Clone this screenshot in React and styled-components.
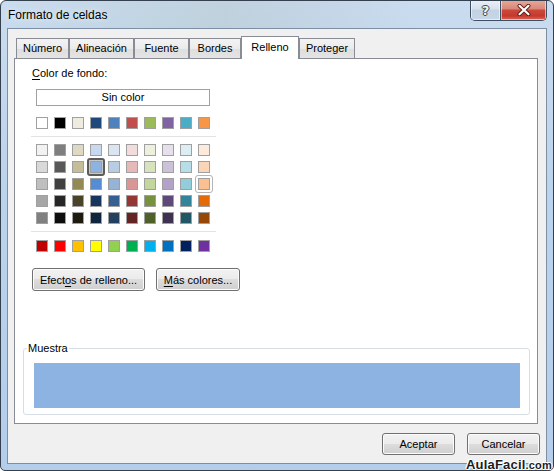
import styled, { createGlobalStyle, css } from "styled-components"

const GlobalStyle = createGlobalStyle`
  html, body { margin: 0; padding: 0; background: #fff; }
  body { font-family: "Liberation Sans", Arial, sans-serif; font-size: 11px; color: #000; }
`

const THEME = ["#FFFFFF", "#000000", "#EEECE1", "#1F497D", "#4F81BD", "#C0504D", "#9BBB59", "#8064A2", "#4BACC6", "#F79646"]

const SHADES = [
  ["#F2F2F2", "#7F7F7F", "#DDD9C3", "#C6D9F0", "#DBE5F1", "#F2DCDB", "#EBF1DD", "#E5E0EC", "#DBEEF3", "#FDEADA"],
  ["#D9D9D9", "#595959", "#C4BD97", "#8DB3E2", "#B8CCE4", "#E5B9B7", "#D7E3BC", "#CCC1D9", "#B7DDE8", "#FBD5B5"],
  ["#BFBFBF", "#404040", "#938953", "#548DD4", "#95B3D7", "#D99694", "#C3D69B", "#B2A2C7", "#92CDDC", "#FAC08F"],
  ["#A6A6A6", "#262626", "#494429", "#17365D", "#366092", "#953734", "#76923C", "#5F497A", "#31859B", "#E36C09"],
  ["#808080", "#0D0D0D", "#1D1B10", "#0F243E", "#244061", "#632423", "#4F6128", "#3F3151", "#205867", "#974806"],
]

const STANDARD = ["#C00000", "#FF0000", "#FFC000", "#FFFF00", "#92D050", "#00B050", "#00B0F0", "#0070C0", "#002060", "#7030A0"]

// label, width in px
const TABS = [
  ["Número", 53],
  ["Alineación", 65],
  ["Fuente", 55],
  ["Bordes", 52],
  ["Relleno", 58],
  ["Proteger", 56],
]

const Window = styled.div`
  position: relative;
  width: 554px;
  height: 471px;
  box-sizing: border-box;
  border: 1px solid #34404e;
  border-radius: 6px 6px 5px 5px;
  background: linear-gradient(180deg, #cadcef 0%, #bcd3ec 40%, #b3cdeb 100%);
  padding: 0 6px 6px;
  display: flex;
  flex-direction: column;
  overflow: hidden;
`

const TitleBar = styled.div`
  height: 27px;
  display: flex;
  align-items: flex-start;
  background: linear-gradient(90deg, rgba(255,255,255,0) 0%, rgba(150,170,150,0.2) 40%, rgba(170,180,190,0.15) 60%, rgba(255,255,255,0) 75%);
  margin: 0 -6px;
  padding: 0 6px;
`

const Title = styled.div`
  font-size: 12px;
  line-height: 14px;
  padding: 7px 0 0 1px;
  text-shadow: 0 0 6px rgba(255, 255, 255, 0.9);
`

const Caption = styled.div`
  margin-left: auto;
  margin-top: -1px;
  display: flex;
  border: 1px solid #3f4f63;
  border-top: none;
  border-radius: 0 0 5px 5px;
  overflow: hidden;
  height: 20px;
`

const CaptionButton = styled.div`
  display: flex;
  align-items: center;
  justify-content: center;
  height: 100%;
  box-shadow: inset 0 0 0 1px rgba(255, 255, 255, 0.55);
  ${p => p.$close ? css`
    width: 45px;
    background: linear-gradient(180deg, #e9a99c 0%, #d98777 45%, #c9493b 50%, #c6392c 80%, #d76c5c 100%);
  ` : css`
    width: 29px;
    border-right: 1px solid #3f4f63;
    background: linear-gradient(180deg, #e9eff6 0%, #d7e2ee 45%, #c3d2e3 50%, #c8d7e7 100%);
  `}
`

const HelpGlyph = styled.span`
  font-family: "DejaVu Sans", sans-serif;
  font-weight: bold;
  font-size: 13px;
  line-height: 13px;
  color: #f4f4f4;
  text-shadow: 0 0 1px #333, 1px 0 0 #4a4a4a, -1px 0 0 #4a4a4a, 0 1px 0 #4a4a4a, 0 -1px 0 #4a4a4a;
`

const Client = styled.div`
  flex: 1;
  border: 1px solid #7f8fa3;
  background: #f0f0f0;
  display: flex;
  flex-direction: column;
  padding: 7px 6px 8px 6px;
`

const TabStrip = styled.div`
  height: 22px;
  display: flex;
  align-items: flex-end;
  padding-left: 2px;
  position: relative;
  z-index: 2;
`

const Tab = styled.div`
  box-sizing: border-box;
  width: ${p => p.$w}px;
  height: 20px;
  line-height: 19px;
  text-align: center;
  border: 1px solid #898c95;
  border-bottom: none;
  background: linear-gradient(180deg, #f3f3f3 0%, #ebebeb 50%, #dedede 51%, #e4e4e4 100%);
  white-space: nowrap;
  ${p => p.$active && css`
    position: relative;
    height: 23px;
    line-height: 21px;
    margin-bottom: -1px;
    background: #fff;
    z-index: 1;
  `}
`

const Panel = styled.div`
  box-sizing: border-box;
  height: 366px;
  margin: 0 2px 0 0;
  border: 1px solid #898c95;
  background: #fff;
  display: flex;
  flex-direction: column;
  padding: 0 7px 8px 8px;
`

const Label = styled.div`
  margin: 7px 0 0 9px;
  line-height: 14px;
`

const Key = styled.span`
  text-decoration: underline;
  text-underline-offset: 2px;
`

const Palette = styled.div`
  width: 185px;
  box-sizing: border-box;
  margin: 9px 0 0 8px;
  display: flex;
  flex-direction: column;
`

const NoColor = styled.div`
  box-sizing: border-box;
  width: 174px;
  height: 17px;
  margin-left: 5px;
  border: 1px solid #a0a0a0;
  text-align: center;
  line-height: 15px;
  font-size: 11px;
`

const SwatchGrid = styled.div`
  display: grid;
  grid-template-columns: repeat(10, 12px);
  column-gap: 6px;
  row-gap: 5px;
  margin: ${p => p.$top}px 0 0 5px;
`

const Separator = styled.div`
  height: 1px;
  background: #e2e2e2;
  margin-top: ${p => p.$top}px;
`

const Swatch = styled.span`
  position: relative;
  box-sizing: border-box;
  width: 12px;
  height: 12px;
  border: 1px solid #a0a0a0;
  background: ${p => p.$color};
  ${p => p.$state === "selected" && css`
    &::after {
      content: "";
      position: absolute;
      inset: -4px;
      border: 2px solid #5c5c5c;
      border-radius: 3px;
      box-shadow: inset 0 0 0 1px #c8c8c8;
    }
  `}
  ${p => p.$state === "hover" && css`
    &::after {
      content: "";
      position: absolute;
      inset: -4px;
      border: 1px solid #b4b4b4;
      border-radius: 3px;
    }
  `}
`

const ButtonRow = styled.div`
  display: flex;
  gap: 11px;
  margin: 16px 0 0 9px;
`

const Button = styled.div`
  box-sizing: border-box;
  height: ${p => p.$h || 23}px;
  width: ${p => p.$w}px;
  border: 1px solid #707070;
  border-radius: 3px;
  background: linear-gradient(180deg, #f2f2f2 0%, #ebebeb 49%, #dddddd 50%, #cfcfcf 100%);
  box-shadow: inset 0 0 0 1px #fcfcfc;
  display: flex;
  align-items: center;
  justify-content: center;
  white-space: nowrap;
`

const Group = styled.fieldset`
  margin: auto 0 0 0;
  border: 1px solid #d5dfe5;
  border-radius: 3px;
  padding: 8px 9px 6px 10px;
  min-width: 0;
`

const Legend = styled.legend`
  padding: 0 1px;
  margin-left: -7px;
  line-height: 13px;
  font-size: 11px;
`

const Sample = styled.div`
  height: 45px;
  background: ${p => p.$color};
`

const Footer = styled.div`
  display: flex;
  justify-content: flex-end;
  gap: 12px;
  margin-top: 9px;
`

const Watermark = styled.div`
  position: absolute;
  right: 1px;
  bottom: -2px;
  font-family: "Liberation Sans", Arial, sans-serif;
  font-weight: bold;
  font-size: 13px;
  color: #1c1c1c;
  letter-spacing: 0.2px;
  text-shadow: 1px 0 0 #fff, -1px 0 0 #fff, 0 1px 0 #fff, 0 -1px 0 #fff, 1px 1px 0 #fff, -1px -1px 0 #fff;
  span { font-size: 11px; }
`

function CloseGlyph() {
  return (
    <svg width="14" height="12" viewBox="0 0 14 12">
      <path d="M2.5 1.8 L11.5 10.2 M11.5 1.8 L2.5 10.2" fill="none" stroke="#5a1c16" strokeWidth="4" strokeLinecap="round" />
      <path d="M2.5 1.8 L11.5 10.2 M11.5 1.8 L2.5 10.2" fill="none" stroke="#fff" strokeWidth="2.2" strokeLinecap="round" />
    </svg>
  )
}

export default function App() {
  const selected = "#8DB3E2"
  return (
    <>
      <GlobalStyle />
      <Window>
        <TitleBar>
          <Title>Formato de celdas</Title>
          <Caption>
            <CaptionButton><HelpGlyph>?</HelpGlyph></CaptionButton>
            <CaptionButton $close><CloseGlyph /></CaptionButton>
          </Caption>
        </TitleBar>
        <Client>
          <TabStrip>
            {TABS.map(([t, w]) => <Tab key={t} $w={w} $active={t === "Relleno"}>{t}</Tab>)}
          </TabStrip>
          <Panel>
            <Label><Key>C</Key>olor de fondo:</Label>
            <Palette>
              <NoColor>Sin color</NoColor>
              <SwatchGrid $top={11}>
                {THEME.map(c => <Swatch key={c} $color={c} />)}
              </SwatchGrid>
              <Separator $top={7} />
              <SwatchGrid $top={7}>
                {SHADES.flat().map((c, i) => (
                  <Swatch key={i} $color={c} $state={c === selected ? "selected" : c === "#FAC08F" ? "hover" : undefined} />
                ))}
              </SwatchGrid>
              <Separator $top={7} />
              <SwatchGrid $top={8}>
                {STANDARD.map(c => <Swatch key={c} $color={c} />)}
              </SwatchGrid>
            </Palette>
            <ButtonRow>
              <Button $w={113}>Efect<Key>o</Key>s de relleno...</Button>
              <Button $w={84}><Key>M</Key>ás colores...</Button>
            </ButtonRow>
            <Group>
              <Legend>Muestra</Legend>
              <Sample $color={selected} />
            </Group>
          </Panel>
          <Footer>
            <Button $w={73} $h={22}>Aceptar</Button>
            <Button $w={73} $h={22}>Cancelar</Button>
          </Footer>
        </Client>
        <Watermark>AulaFacil<span>.com</span></Watermark>
      </Window>
    </>
  )
}
